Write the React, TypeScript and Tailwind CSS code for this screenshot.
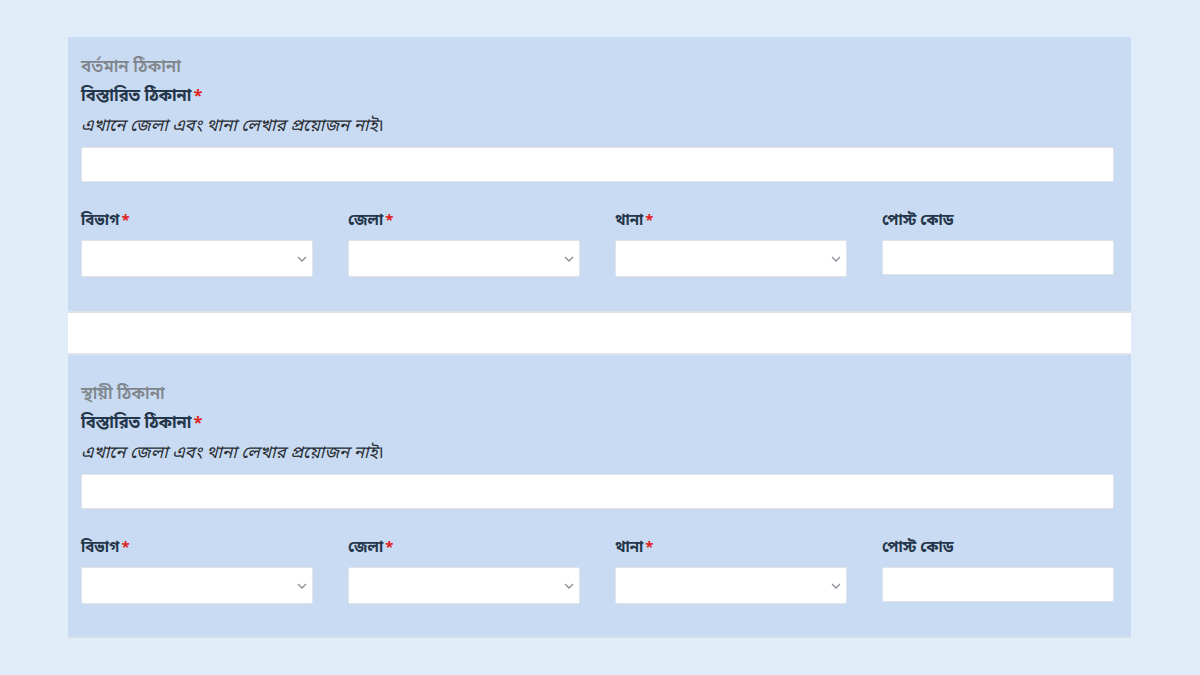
import React from "react";

const font = { fontFamily: '"Noto Sans", "Noto Sans Bengali", "Lato", sans-serif' };

function Star() {
  return <span className="text-[#e0201c] ml-[2px]">*</span>;
}

function Chevron() {
  return (
    <svg width="10" height="6" viewBox="0 0 10 6" className="absolute right-[5px] top-1/2 -translate-y-1/2">
      <path d="M1 1l4 4 4-4" fill="none" stroke="#8a8f96" strokeWidth="1.3" />
    </svg>
  );
}

function SelectBox() {
  return (
    <div className="relative h-[37px] bg-white border border-[#dfe4ea] rounded-[2px]">
      <div className="absolute right-0 top-0 bottom-0 w-[20px]">
        <Chevron />
      </div>
    </div>
  );
}

function Section({ title, pt, pb }: { title: string; pt: string; pb: string }) {
  return (
    <div className={`bg-[#c9dbf2] pl-[13px] pr-[17px] ${pb} ${pt}`}>
      <div className="h-[20px] leading-[20px] text-[17px] font-semibold text-[#80858c]">{title}</div>
      <div className="mt-[9px] h-[20px] leading-[20px] text-[16.5px] font-bold text-[#24364a]">
        বিস্তারিত ঠিকানা<Star />
      </div>
      <div className="mt-[10px] h-[20px] leading-[20px] text-[17px] italic text-[#2a2f36]">
        এখানে জেলা এবং থানা লেখার প্রয়োজন নাই।
      </div>
      <div className="mt-[12px] h-[35px] bg-white border border-[#dfe4ea] rounded-[2px]" />
      <div className="mt-[27px] grid grid-cols-4 gap-x-[35px]">
        {[
          ["বিভাগ", true],
          ["জেলা", true],
          ["থানা", true],
          ["পোস্ট কোড", false],
        ].map(([l, req], i) => (
          <div key={i}>
            <div className="h-[20px] leading-[20px] text-[15px] font-bold text-[#24364a]">
              {l as string}
              {req ? <Star /> : null}
            </div>
            <div className="mt-[11px]">
              {i < 3 ? (
                <SelectBox />
              ) : (
                <div className="h-[35px] bg-white border border-[#dfe4ea] rounded-[2px]" />
              )}
            </div>
          </div>
        ))}
      </div>
    </div>
  );
}

export default function App() {
  return (
    <div className="w-[1200px] h-[675px] bg-[#e0edf9] pt-[37px] pl-[68px]" style={font}>
      <div className="w-[1063px]">
        <Section title="বর্তমান ঠিকানা" pt="pt-[19px]" pb="pb-[34px]" />
        <div className="h-[44px] bg-white border-t-2 border-b-2 border-[#dde3ea]" />
        <Section title="স্থায়ী ঠিকানা" pt="pt-[28px]" pb="pb-[32px]" />
        <div className="h-[2px] bg-[#d5dde8]" />
      </div>
    </div>
  );
}
